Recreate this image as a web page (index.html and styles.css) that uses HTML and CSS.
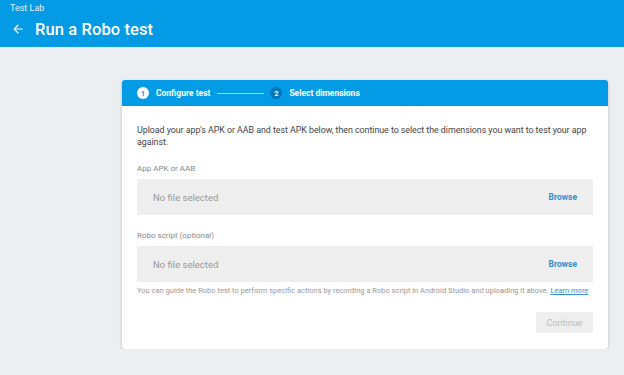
FILE: index.html
```html
<!DOCTYPE html>
<html lang="en">
<head>
  <meta charset="UTF-8">
  <title>Run a Robo test</title>
  <link rel="stylesheet" href="styles.css">
</head>
<body>
  <header class="topbar">
    <div class="crumb">Test Lab</div>
    <div class="title-row">
      <svg class="back" width="14" height="14" viewBox="0 0 24 24">
        <path d="M20 11H7.83l5.59-5.59L12 4l-8 8 8 8 1.41-1.41L7.83 13H20v-2z" fill="#fff"/>
      </svg>
      <h1>Run a Robo test</h1>
    </div>
  </header>
  <main class="page">
    <div class="card">
      <div class="stepper">
        <div class="step active">
          <span class="step-num">1</span>
          <span class="step-label">Configure test</span>
        </div>
        <span class="step-line"></span>
        <div class="step">
          <span class="step-num">2</span>
          <span class="step-label">Select dimensions</span>
        </div>
      </div>
      <div class="card-body">
        <p class="intro">Upload your app's APK or AAB and test APK below, then continue to select the dimensions you want to test your app against.</p>
        <div class="field">
          <div class="field-label">App APK or AAB</div>
          <div class="file-box">
            <span class="file-name">No file selected</span>
            <span class="browse">Browse</span>
          </div>
        </div>
        <div class="field">
          <div class="field-label">Robo script (optional)</div>
          <div class="file-box">
            <span class="file-name">No file selected</span>
            <span class="browse">Browse</span>
          </div>
          <div class="hint">You can guide the Robo test to perform specific actions by recording a Robo script in Android Studio and uploading it above. <a href="#">Learn more</a></div>
        </div>
        <div class="actions">
          <button class="btn-continue" disabled>Continue</button>
        </div>
      </div>
    </div>
  </main>
</body>
</html>
```

FILE: styles.css
```css
html, body {
  margin: 0; padding: 0;
  background: #eceff1;
  font-family: Roboto, "Noto Sans", Arial, sans-serif;
}
.topbar {
  background: #039be5; color: #fff;
  height: 47px; box-sizing: border-box;
  padding: 3px 0 0 0;
}
.crumb { font-size: 9px; padding-left: 10px; line-height: 11px; opacity: .9; }
.title-row { display: flex; align-items: center; height: 30px; padding-left: 11px; }
.back { margin-right: 10px; }
.title-row h1 { margin: 0; font-size: 16.5px; font-weight: 500; letter-spacing: .1px; }
.page { padding: 33px 16px 0 122px; }
.card {
  width: 486px; background: #fff; border-radius: 3px;
  box-shadow: 0 1px 3px rgba(0,0,0,.25);
  overflow: hidden;
}
.stepper {
  background: #039be5; height: 26px;
  display: flex; align-items: center; padding-left: 15px;
}
.step { display: flex; align-items: center; gap: 7px; }
.step-num {
  width: 12px; height: 12px; border-radius: 50%;
  display: flex; align-items: center; justify-content: center;
  font-size: 7.5px; font-weight: 700;
  background: #0277bd; color: #fff;
}
.step.active .step-num { background: #fff; color: #039be5; }
.step-label { color: #fff; font-size: 8.5px; font-weight: 700; }
.step-line { width: 47px; height: 1px; background: rgba(255,255,255,.6); margin: 0 6px 0 7px; }
.card-body { padding: 18px 15px 16px 15px; }
.intro { margin: 0; font-size: 8.9px; line-height: 12px; color: #444; letter-spacing: -.05px; }
.field { margin-top: 16px; }
.field + .field { margin-top: 16px; }
.field-label { font-size: 8px; color: #888; line-height: 10px; }
.file-box {
  margin-top: 5px; height: 36px; background: #eeeeee;
  display: flex; align-items: center; justify-content: space-between;
  padding: 0 16px;
}
.file-name { font-size: 9.5px; color: #999; }
.browse { font-size: 8.5px; font-weight: 700; color: #2f8fd0; }
.hint { margin-top: 4px; font-size: 7.5px; color: #999; line-height: 10px; white-space: nowrap; }
.hint a { color: #3c8fd0; }
.actions { display: flex; justify-content: flex-end; margin-top: 16px; }
.btn-continue {
  width: 57px; height: 21px; border: 0; border-radius: 3px;
  background: #eeeeee; color: #bdbdbd;
  font-family: inherit; font-size: 9px;
}
```
